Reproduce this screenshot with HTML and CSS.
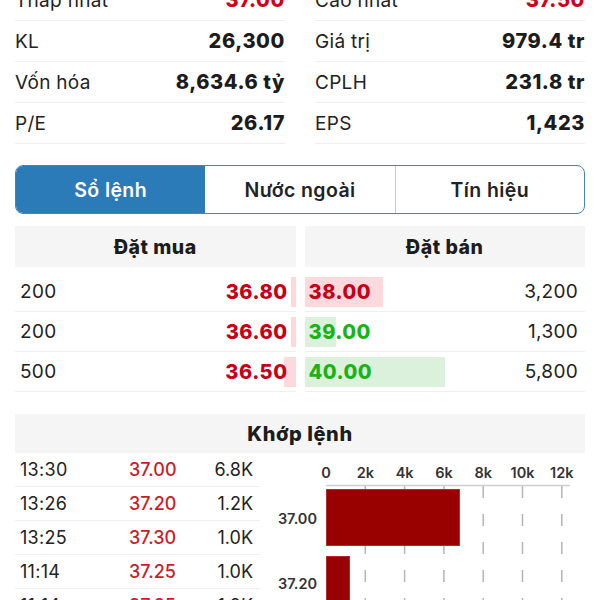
FILE: index.html
```html
<!DOCTYPE html>
<html lang="vi">
<head>
<meta charset="utf-8">
<title>Sổ lệnh</title>
<link rel="stylesheet" href="styles.css">
</head>
<body>
<div class="page">
  <section class="stats">
    <div class="stat-col">
      <div class="stat-row"><span class="label">Thấp nhất</span><span class="value red">37.00</span></div>
      <div class="stat-row"><span class="label">KL</span><span class="value">26,300</span></div>
      <div class="stat-row"><span class="label">Vốn hóa</span><span class="value">8,634.6 tỷ</span></div>
      <div class="stat-row"><span class="label">P/E</span><span class="value">26.17</span></div>
    </div>
    <div class="stat-col">
      <div class="stat-row"><span class="label">Cao nhất</span><span class="value red">37.50</span></div>
      <div class="stat-row"><span class="label">Giá trị</span><span class="value">979.4 tr</span></div>
      <div class="stat-row"><span class="label">CPLH</span><span class="value">231.8 tr</span></div>
      <div class="stat-row"><span class="label">EPS</span><span class="value">1,423</span></div>
    </div>
  </section>

  <nav class="tabs">
    <div class="tab active">Sổ lệnh</div>
    <div class="tab">Nước ngoài</div>
    <div class="tab">Tín hiệu</div>
  </nav>

  <section class="book">
    <div class="book-col">
      <div class="book-head">Đặt mua</div>
      <div class="book-row buy"><span class="bar bar-buy" style="width:4.8px"></span><span class="qty">200</span><span class="price dn">36.80</span></div>
      <div class="book-row buy"><span class="bar bar-buy" style="width:4.8px"></span><span class="qty">200</span><span class="price dn">36.60</span></div>
      <div class="book-row buy"><span class="bar bar-buy" style="width:12px"></span><span class="qty">500</span><span class="price dn">36.50</span></div>
    </div>
    <div class="book-col">
      <div class="book-head">Đặt bán</div>
      <div class="book-row sell"><span class="bar bar-red" style="width:78px"></span><span class="price dn">38.00</span><span class="qty">3,200</span></div>
      <div class="book-row sell"><span class="bar bar-green" style="width:31px"></span><span class="price up">39.00</span><span class="qty">1,300</span></div>
      <div class="book-row sell"><span class="bar bar-green" style="width:140px"></span><span class="price up">40.00</span><span class="qty">5,800</span></div>
    </div>
  </section>

  <section class="match">
    <div class="match-head">Khớp lệnh</div>
    <div class="match-body">
      <div class="trades">
        <div class="trade"><span>13:30</span><span class="tp">37.00</span><span class="tv">6.8K</span></div>
        <div class="trade"><span>13:26</span><span class="tp">37.20</span><span class="tv">1.2K</span></div>
        <div class="trade"><span>13:25</span><span class="tp">37.30</span><span class="tv">1.0K</span></div>
        <div class="trade"><span>11:14</span><span class="tp">37.25</span><span class="tv">1.0K</span></div>
        <div class="trade"><span>11:14</span><span class="tp">37.25</span><span class="tv">1.0K</span></div>
      </div>
      <svg class="chart" width="315" height="160" viewBox="0 0 315 160">
        <g class="ticks">
          <text x="56" y="25">0</text>
          <text x="95.3" y="25">2k</text>
          <text x="134.6" y="25">4k</text>
          <text x="173.9" y="25">6k</text>
          <text x="213.2" y="25">8k</text>
          <text x="252.5" y="25">10k</text>
          <text x="291.8" y="25">12k</text>
        </g>
        <g class="grid">
          <line x1="95.3" y1="33" x2="95.3" y2="160"/>
          <line x1="134.6" y1="33" x2="134.6" y2="160"/>
          <line x1="173.9" y1="33" x2="173.9" y2="160"/>
          <line x1="213.2" y1="33" x2="213.2" y2="160"/>
          <line x1="252.5" y1="33" x2="252.5" y2="160"/>
          <line x1="291.8" y1="33" x2="291.8" y2="160"/>
        </g>
        <line class="axis" x1="56" y1="32.5" x2="300" y2="32.5"/>
        <rect class="bar-rect" x="56.5" y="36.5" width="133" height="56"/>
        <rect class="bar-rect" x="56.5" y="103.5" width="23" height="56"/>
        <g class="ylabels">
          <text x="47" y="71">37.00</text>
          <text x="47" y="136">37.20</text>
        </g>
      </svg>
    </div>
  </section>
</div>
</body>
</html>
```

FILE: styles.css
```css
* { box-sizing: border-box; }

html, body {
  margin: 0;
  padding: 0;
  background: #fff;
  overflow: hidden;
}

body {
  font-family: "Inter", "Noto Sans", "Liberation Sans", sans-serif;
  color: #1f1f1f;
}

.page {
  padding: 0 15px;
  margin-top: -20px;
}

/* stats */
.stats {
  display: grid;
  grid-template-columns: 1fr 1fr;
  column-gap: 30px;
}

.stat-row {
  height: 41px;
  display: flex;
  align-items: center;
  justify-content: space-between;
  border-bottom: 1px solid #efefef;
}

.label {
  font-size: 19px;
  letter-spacing: 0.3px;
  color: #222;
}

.value {
  font-size: 20px;
  font-weight: 800;
  letter-spacing: 0.6px;
  color: #1c1c1c;
}

.value.red { color: #d0021b; }

/* tabs */
.tabs {
  margin-top: 21px;
  display: grid;
  grid-template-columns: 1fr 1fr 1fr;
  height: 49px;
  border: 1.5px solid #3f86c0;
  border-radius: 8px;
  overflow: hidden;
}

.tab {
  display: flex;
  align-items: center;
  justify-content: center;
  font-size: 19.5px;
  font-weight: 600;
  letter-spacing: 0.4px;
  color: #222;
  border-left: 1px solid #c9c9c9;
}

.tab:first-child { border-left: none; }

.tab.active {
  background: #2b7bb9;
  color: #fff;
}

.tab.active + .tab { border-left: none; }

/* order book */
.book {
  margin-top: 12px;
  display: grid;
  grid-template-columns: 1fr 1fr;
  column-gap: 9px;
}

.book-head {
  height: 41px;
  background: #f5f5f5;
  display: flex;
  align-items: center;
  justify-content: center;
  font-size: 19.5px;
  font-weight: 800;
  letter-spacing: 0.5px;
  color: #1c1c1c;
  margin-bottom: 5px;
}

.book-row {
  position: relative;
  height: 40px;
  border-bottom: 1px solid #f0f0f0;
  display: flex;
  align-items: center;
  justify-content: space-between;
  font-size: 19px;
  letter-spacing: 0.3px;
}

.book-row.buy { padding: 0 8px 0 5px; }
.book-row.sell { padding: 0 7px 0 4px; }

.bar {
  position: absolute;
  top: 5px;
  height: 30px;
}

.buy .bar { right: 0; }
.sell .bar { left: 0; }

.bar-buy, .bar-red { background: #fbd9dc; }
.bar-green { background: #dcf1dc; }

.qty {
  position: relative;
  color: #222;
}

.price {
  position: relative;
  font-size: 20px;
  font-weight: 800;
  letter-spacing: 0.5px;
}

.price.dn { color: #c4001a; }
.price.up { color: #17b317; }

/* match */
.match { margin-top: 22px; }

.match-head {
  height: 39px;
  background: #f5f5f5;
  display: flex;
  align-items: center;
  justify-content: center;
  font-size: 20px;
  font-weight: 800;
  letter-spacing: 0.6px;
  color: #1c1c1c;
}

.match-body {
  display: flex;
  gap: 10px;
}

.trades {
  width: 245px;
  flex: none;
}

.trade {
  height: 34px;
  display: grid;
  grid-template-columns: 109px 1fr auto;
  align-items: center;
  padding: 0 7px 0 5px;
  border-bottom: 1px solid #efefef;
  font-size: 18px;
  letter-spacing: 0.3px;
  color: #222;
}

.tp { color: #cc1c2c; font-weight: 500; letter-spacing: 0; }
.tv { text-align: right; letter-spacing: 0; }

.chart {
  display: block;
  flex: none;
}

.ticks text {
  font-family: "Inter", "Liberation Sans", sans-serif;
  font-size: 14.5px;
  font-weight: 600;
  fill: #333;
  text-anchor: middle;
}

.ylabels text {
  font-family: "Inter", "Liberation Sans", sans-serif;
  font-size: 14.5px;
  font-weight: 600;
  fill: #333;
  text-anchor: end;
}

.grid line {
  stroke: #b5b5b5;
  stroke-width: 1.5;
  stroke-dasharray: 12 16;
}

.axis {
  stroke: #cfcfcf;
  stroke-width: 1.5;
}

.bar-rect {
  fill: #990000;
  stroke: #b52a2a;
  stroke-width: 1;
}
```
